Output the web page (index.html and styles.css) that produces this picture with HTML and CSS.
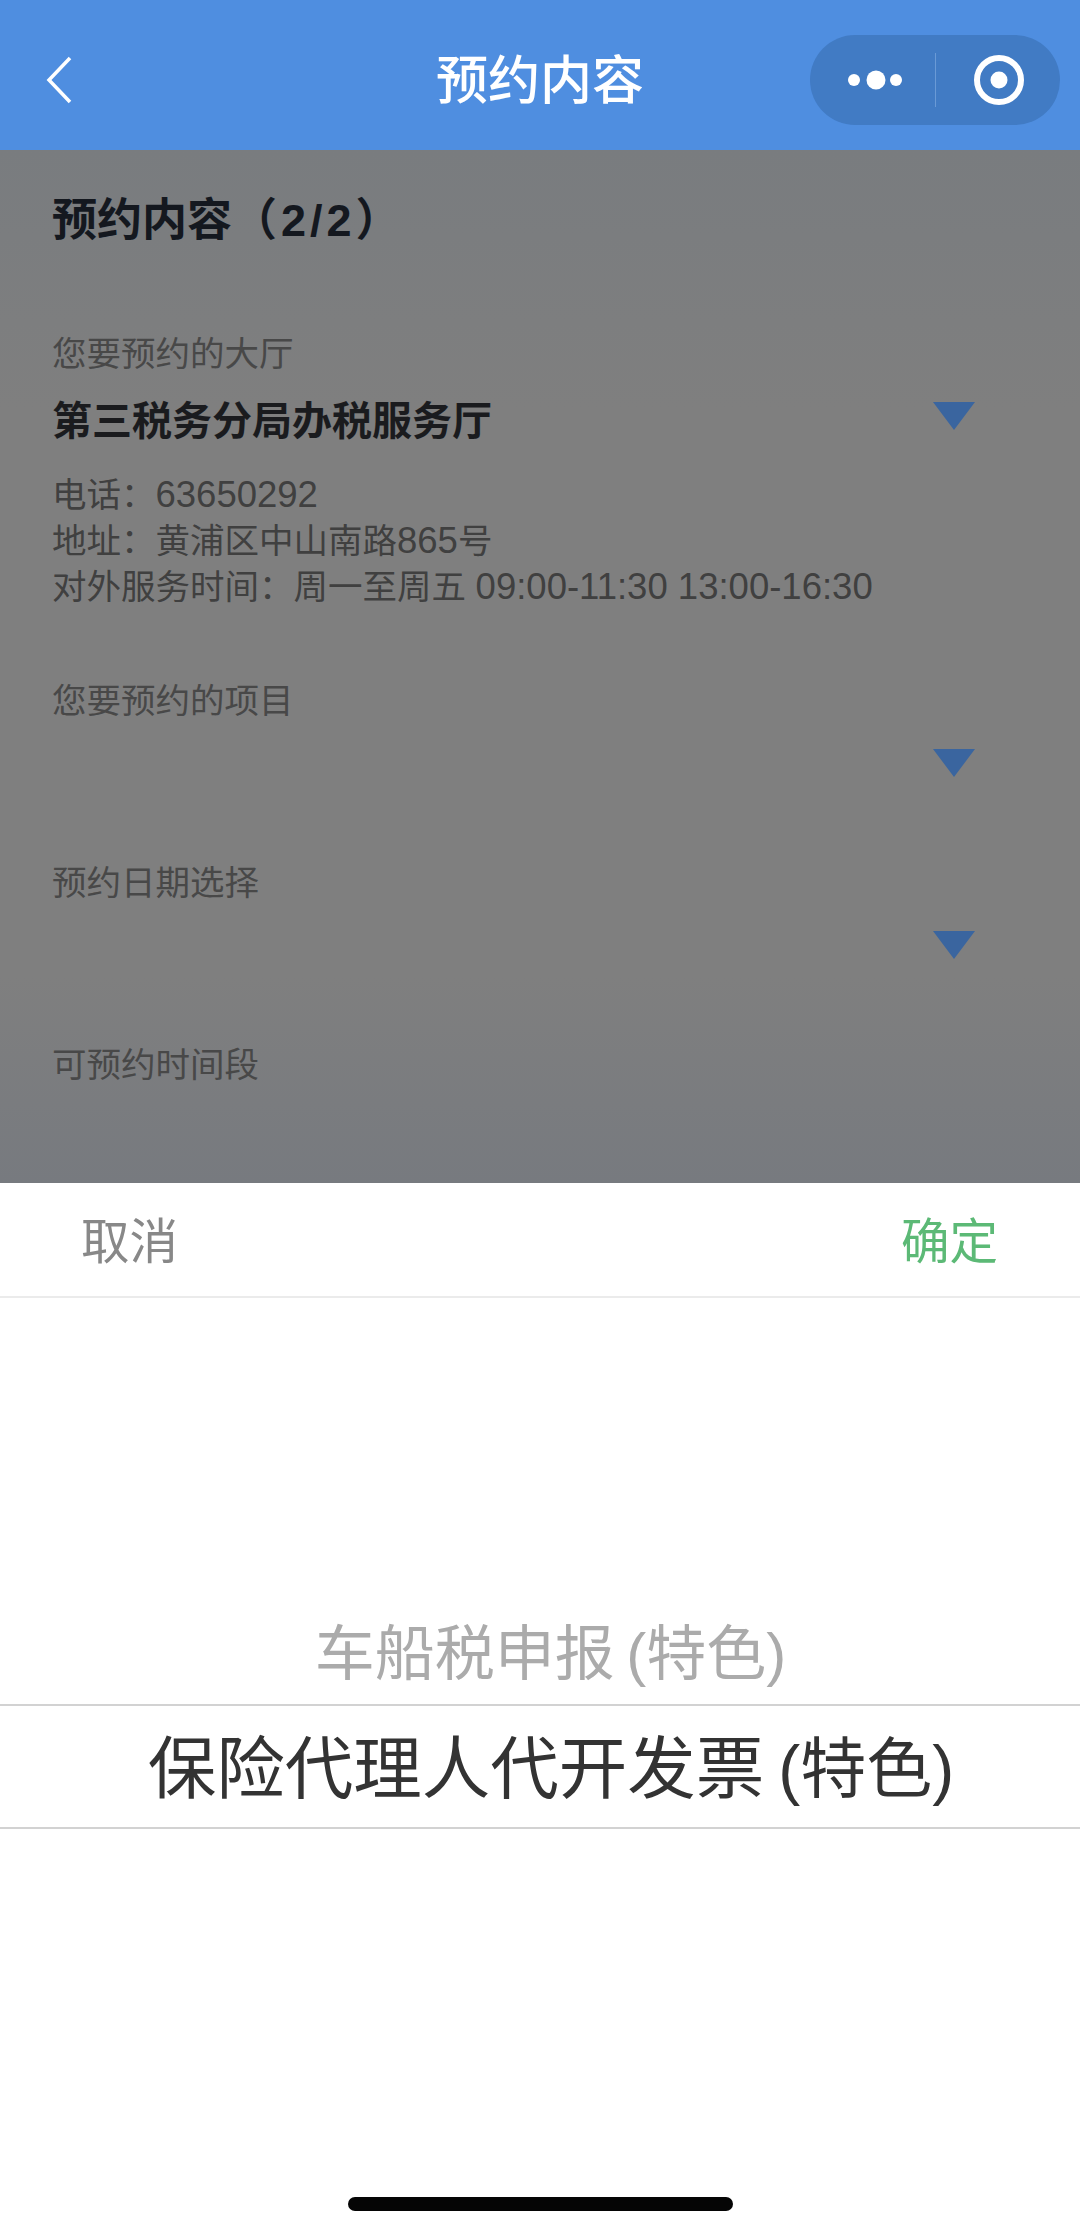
FILE: index.html
```html
<!DOCTYPE html>
<html lang="zh-CN">
<head>
    <meta charset="UTF-8">
    <meta name="viewport" content="width=device-width, initial-scale=1.0">
    <title>预约内容</title>
    <link rel="stylesheet" href="styles.css">
</head>
<body>

    <header class="nav-bar">
        <svg class="back-icon" width="30" height="50" viewBox="0 0 30 50">
            <path d="M26 3 L5 25 L26 47" fill="none" stroke="#fff" stroke-width="3.5"/>
        </svg>
        <div class="nav-title">预约内容</div>
        <div class="capsule">
            <svg class="more-icon" width="56" height="22" viewBox="0 0 56 22">
                <circle cx="6" cy="11" r="6" fill="#fff"/>
                <circle cx="28" cy="11" r="9.5" fill="#fff"/>
                <circle cx="48" cy="11" r="6" fill="#fff"/>
            </svg>
            <div class="capsule-line"></div>
            <svg class="target-icon" width="52" height="52" viewBox="0 0 52 52">
                <circle cx="26" cy="26" r="22" fill="none" stroke="#fff" stroke-width="6"/>
                <circle cx="26" cy="26" r="8.5" fill="#fff"/>
            </svg>
        </div>
    </header>

    <main class="form-area">
        <h1 class="form-title">预约内容<span class="form-step">（2/2）</span></h1>

        <section class="field field-hall">
            <div class="field-label">您要预约的大厅</div>
            <div class="select-row">
                <div class="select-value">第三税务分局办税服务厅</div>
                <div class="arrow"></div>
            </div>
            <div class="hall-info">
                <div>电话：<span class="num">63650292</span></div>
                <div>地址：黄浦区中山南路<span class="num">865</span>号</div>
                <div>对外服务时间：周一至周五 <span class="num">09:00-11:30 13:00-16:30</span></div>
            </div>
        </section>

        <section class="field">
            <div class="field-label">您要预约的项目</div>
            <div class="select-row">
                <div class="select-value"></div>
                <div class="arrow"></div>
            </div>
        </section>

        <section class="field">
            <div class="field-label">预约日期选择</div>
            <div class="select-row">
                <div class="select-value"></div>
                <div class="arrow"></div>
            </div>
        </section>

        <section class="field">
            <div class="field-label">可预约时间段</div>
        </section>
    </main>

    <section class="picker">
        <div class="picker-actions">
            <span class="btn-cancel">取消</span>
            <span class="btn-ok">确定</span>
        </div>
        <div class="picker-list">
            <div class="picker-item">车船税申报 (特色)</div>
            <div class="picker-item picker-item-active">保险代理人代开发票 <span class="picker-tag">(特色)</span></div>
        </div>
        <div class="home-bar"></div>
    </section>

</body>
</html>
```

FILE: styles.css
```css
* {
    box-sizing: border-box;
}

html, body {
    margin: 0;
    padding: 0;
}

body {
    width: 1080px;
    height: 2235px;
    overflow: hidden;
    display: flex;
    flex-direction: column;
    font-family: "Liberation Sans", "Noto Sans CJK SC", sans-serif;
    background-color: #fff;
}

/* top bar */
.nav-bar {
    height: 150px;
    flex: none;
    display: grid;
    grid-template-columns: 250px 1fr 250px;
    align-items: center;
    padding: 10px 20px 0 20px;
    background-color: #4f8ee0;
}

.back-icon {
    margin-left: 24px;
}

.nav-title {
    padding-top: 2px;
    text-align: center;
    color: #fff;
    font-size: 52px;
    line-height: 60px;
    font-weight: 500;
}

.capsule {
    width: 250px;
    height: 90px;
    display: flex;
    align-items: center;
    border-radius: 45px;
    background-color: #417bc4;
}

.more-icon {
    margin-left: 38px;
    flex: none;
}

.capsule-line {
    width: 1px;
    height: 54px;
    margin-left: 31px;
    flex: none;
    background-color: #6a9ad6;
}

.target-icon {
    margin-left: 37px;
    flex: none;
}

/* dimmed form */
.form-area {
    height: 1033px;
    flex: none;
    overflow: hidden;
    padding: 41px 54px 0 52px;
    background: linear-gradient(#797c7f, #7f7f7f 25%, #7f7f7f 80%, #777a7f);
}

.form-title {
    margin: 0 0 80px 0;
    color: #14181f;
    font-size: 45px;
    line-height: 60px;
    font-weight: bold;
}

.form-step {
    letter-spacing: 4px;
}

.field {
    margin-bottom: 48px;
}

.field-hall {
    margin-bottom: 68px;
}

.field-label {
    color: #484848;
    font-size: 34.5px;
    line-height: 46px;
}

.select-row {
    height: 88px;
    display: flex;
    align-items: center;
    justify-content: space-between;
    padding-right: 51px;
}

.select-value {
    color: #1a1b1e;
    font-size: 40px;
    line-height: 50px;
    font-weight: bold;
}

.arrow {
    width: 0;
    height: 0;
    margin-top: -10px;
    border-left: 21px solid transparent;
    border-right: 21px solid transparent;
    border-top: 28px solid #3a659f;
}

.hall-info {
    padding-top: 7px;
    color: #404040;
    font-size: 34.5px;
    line-height: 46px;
}

.num {
    font-size: 36.5px;
}

/* bottom picker */
.picker {
    flex: 1;
    display: flex;
    flex-direction: column;
    background-color: #fff;
}

.picker-actions {
    height: 115px;
    flex: none;
    display: flex;
    align-items: center;
    justify-content: space-between;
    padding: 0 82px 3px 81px;
    border-bottom: 2px solid #ebebeb;
    font-size: 48.5px;
}

.btn-cancel {
    color: #888;
}

.btn-ok {
    color: #5cb976;
}

.picker-list {
    height: 900px;
    padding-top: 289px;
}

.picker-item {
    height: 117px;
    display: flex;
    align-items: center;
    justify-content: center;
    padding: 6px 0 0 21px;
    color: #ababab;
    font-size: 60px;
    word-spacing: -5px;
    white-space: pre;
}

.picker-item-active {
    height: 125px;
    padding: 0 0 7px 22px;
    border-top: 2px solid #d2d2d2;
    border-bottom: 2px solid #d2d2d2;
    color: #333;
    font-size: 68.5px;
}

.picker-tag {
    font-size: 66px;
}

.home-bar {
    width: 385px;
    height: 14px;
    margin: -1px auto 0 auto;
    flex: none;
    border-radius: 7px;
    background-color: #050505;
}
```
